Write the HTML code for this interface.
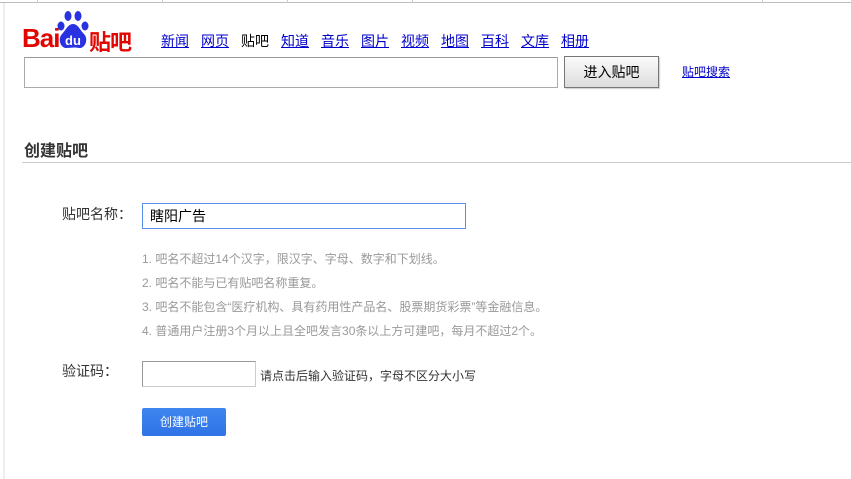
<!DOCTYPE html>
<html><head><meta charset="utf-8"><style>
body{margin:0;width:851px;height:479px;background:#fff;position:relative;overflow:hidden;font-family:"Liberation Sans","Noto Sans CJK SC",sans-serif;}
.a{position:absolute;white-space:nowrap}
.nav a{color:#00c;text-decoration:underline;font-size:14px;position:absolute;top:31px}
.hint{position:absolute;left:142px;font-size:12px;color:#999}
</style></head><body>
<div class="a" style="left:0;top:0;width:851px;height:2px;border-bottom:1px solid #bbb"></div>
<div class="a" style="left:37px;top:0;width:1px;height:3px;background:#ccc"></div>
<div class="a" style="left:162px;top:0;width:1px;height:3px;background:#ccc"></div>
<div class="a" style="left:287px;top:0;width:1px;height:3px;background:#ccc"></div>
<div class="a" style="left:412px;top:0;width:1px;height:3px;background:#ccc"></div>
<div class="a" style="left:762px;top:0;width:1px;height:3px;background:#ccc"></div>
<div class="a" style="left:3px;top:3px;width:2px;height:476px;background:#eee"></div>

<div class="a" style="left:22px;top:23px;font-size:26px;font-weight:bold;color:#e10601;letter-spacing:-1px">Bai</div>
<svg class="a" style="left:56px;top:10px" width="34" height="40" viewBox="0 0 34 40">
<ellipse cx="12" cy="6" rx="3.5" ry="5" fill="#2932e1"/><ellipse cx="22" cy="6" rx="3.5" ry="5" fill="#2932e1"/>
<ellipse cx="5" cy="16" rx="3.5" ry="4.5" fill="#2932e1"/><ellipse cx="29" cy="16" rx="3.5" ry="4.5" fill="#2932e1"/>
<path d="M17 14c-5 0-7 6-11 10-5 5-1 15 5 14 3 0 8-1 12 0 6 1 10-9 5-14-4-4-6-10-11-10z" fill="#2932e1"/>
<text x="17" y="35" font-size="13" fill="#fff" text-anchor="middle" font-family="Liberation Sans" font-weight="bold">du</text>
</svg>
<div class="a" style="left:89px;top:25px;font-size:22px;font-weight:bold;color:#e10601;letter-spacing:-1px">贴吧</div>

<div class="nav">
<a style="left:161px">新闻</a><a style="left:201px">网页</a><span class="a" style="left:241px;top:31px;font-size:14px;color:#000">贴吧</span><a style="left:281px">知道</a><a style="left:321px">音乐</a><a style="left:361px">图片</a><a style="left:401px">视频</a><a style="left:441px">地图</a><a style="left:481px">百科</a><a style="left:521px">文库</a><a style="left:561px">相册</a>
</div>

<div class="a" style="left:24px;top:57px;width:532px;height:29px;border:1px solid #aaa;border-top-color:#999"></div>
<div class="a" style="left:564px;top:56px;width:93px;height:30px;border:1px solid #777;background:linear-gradient(#fbfbfb,#ddd);font-size:14px;text-align:center;line-height:30px;box-shadow:1px 1px 1px #ccc">进入贴吧</div>
<div class="a" style="left:682px;top:63px;font-size:12px;color:#00c;text-decoration:underline">贴吧搜索</div>

<div class="a" style="left:24px;top:137px;font-size:16px;font-weight:bold;color:#333">创建贴吧</div>
<div class="a" style="left:22px;top:162px;width:829px;height:1px;background:#ccc"></div>

<div class="a" style="left:62px;top:204px;font-size:14px;color:#333">贴吧名称：</div>
<div class="a" style="left:142px;top:203px;width:322px;height:24px;border:1px solid #5b8fe8;font-size:14px;line-height:24px;padding-left:0"><span style="margin-left:7px">瞎阳广告</span></div>

<div class="hint" style="top:250px">1. 吧名不超过14个汉字，限汉字、字母、数字和下划线。</div>
<div class="hint" style="top:274px">2. 吧名不能与已有贴吧名称重复。</div>
<div class="hint" style="top:298px">3. 吧名不能包含“医疗机构、具有药用性产品名、股票期货彩票”等金融信息。</div>
<div class="hint" style="top:322px">4. 普通用户注册3个月以上且全吧发言30条以上方可建吧，每月不超过2个。</div>

<div class="a" style="left:62px;top:361px;font-size:14px;color:#333">验证码：</div>
<div class="a" style="left:142px;top:361px;width:112px;height:24px;border:1px solid #aaa;border-color:#999 #ccc #ccc #999"></div>
<div class="a" style="left:260px;top:367px;font-size:12px;color:#333">请点击后输入验证码，字母不区分大小写</div>

<div class="a" style="left:142px;top:408px;width:84px;height:28px;background:linear-gradient(#3f86f0,#2f73e6);border-radius:2px;color:#fff;font-size:12px;text-align:center;line-height:28px">创建贴吧</div>
</body></html>
